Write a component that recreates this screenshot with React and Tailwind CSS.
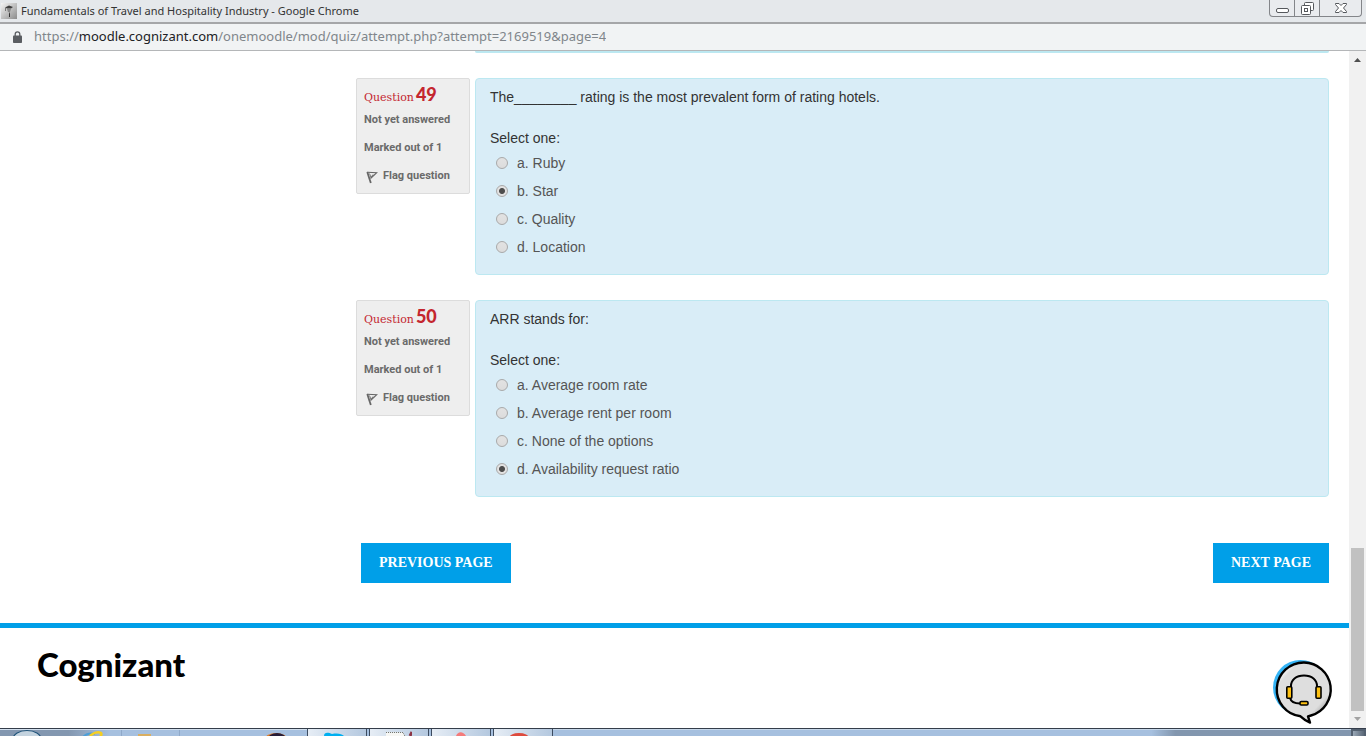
const questions = [
  {
    number: 49,
    text: 'The________ rating is the most prevalent form of rating hotels.',
    options: ['a. Ruby', 'b. Star', 'c. Quality', 'd. Location'],
    selected: 1,
  },
  {
    number: 50,
    text: 'ARR stands for:',
    options: [
      'a. Average room rate',
      'b. Average rent per room',
      'c. None of the options',
      'd. Availability request ratio',
    ],
    selected: 3,
  },
];

function TitleBar() {
  return (
    <header className="flex h-6 shrink-0 items-start border-b-2 border-[#a5a6a8] bg-[#e5e8eb] font-['Noto_Sans',sans-serif]">
      <div className="flex h-[22px] min-w-0 flex-1 items-center gap-1 pl-px">
        <svg width="16" height="16" viewBox="0 0 16 16" aria-hidden="true">
          <defs>
            <linearGradient id="fav" x1="0" y1="0" x2="1" y2="1">
              <stop offset="0" stopColor="#f4f4f4" />
              <stop offset="1" stopColor="#8c8c8c" />
            </linearGradient>
          </defs>
          <rect width="16" height="16" fill="url(#fav)" />
          <path d="M4 4.500l4-2 4 1.500-2 1.500H6z" fill="#3e3e3e" />
          <path d="M6 6h4l-1 3H7z" fill="#888" />
          <path d="M8 9l1 1.500V14H8z" fill="#333" />
          <path d="M4.500 5v3" stroke="#777" />
        </svg>
        <h1 className="truncate text-[11px] text-[#333]">
          Fundamentals of Travel and Hospitality Industry - Google Chrome
        </h1>
      </div>
      <div className="mr-1 flex h-[17px] overflow-hidden rounded-b border-x border-b border-[#838589] bg-[#e9ebee]">
        <button type="button" aria-label="Minimize" className="flex w-[25px] items-center justify-center border-r border-[#838589]">
          <svg width="13" height="17" viewBox="0 0 13 17" fill="#fff" stroke="#55585c">
            <rect x="0.5" y="8.5" width="12" height="4" rx="1.5" />
          </svg>
        </button>
        <button type="button" aria-label="Restore" className="flex w-[25px] items-center justify-center border-r border-[#838589]">
          <svg width="13" height="17" viewBox="0 0 13 17" fill="#fff" stroke="#55585c">
            <rect x="3.5" y="2.5" width="9" height="8" rx="1" />
            <rect x="0.5" y="5.5" width="9" height="9" rx="1" />
            <rect x="3.5" y="8.5" width="3" height="3" />
          </svg>
        </button>
        <button type="button" aria-label="Close" className="flex w-[41px] items-center justify-center">
          <svg width="12" height="17" viewBox="0 0 12 17" fill="#fff" stroke="#55585c">
            <path d="M0.5 3.5h3.5l2 2 2-2h3.5v1l-3 3.5 3 3.5v1H8l-2-2-2 2H0.5v-1l3-3.5-3-3.5z" />
          </svg>
        </button>
      </div>
    </header>
  );
}

function AddressBar() {
  return (
    <div className="flex h-[27px] shrink-0 items-center gap-3 border-b border-[#b4b6b8] bg-[#f1f3f4] pl-[13px] font-['Noto_Sans',sans-serif] text-[13px] text-[#80868b]">
      <svg width="9" height="12" viewBox="0 0 9 12" aria-hidden="true">
        <path d="M2.2 5V3.2a2.3 2.3 0 0 1 4.6 0V5" fill="none" stroke="#5a5d61" strokeWidth="1.3" />
        <rect y="4.5" width="9" height="7.5" rx="0.8" fill="#5a5d61" />
      </svg>
      <span className="truncate">
        https://<span className="text-[#202124]">moodle.cognizant.com</span>
        /onemoodle/mod/quiz/attempt.php?attempt=2169519&amp;page=4
      </span>
    </div>
  );
}

function FlagIcon() {
  return (
    <svg width="12" height="16" viewBox="0 0 12 16" fill="none" stroke="#666" aria-hidden="true">
      <path d="M1.300 4L4.800 15" strokeWidth="1.8" />
      <path d="M1 4.300l9.800.4L4.500 10.500" strokeWidth="1.1" />
      <path d="M3.500 5.500L5 9.500l2-3" strokeWidth="0.9" />
    </svg>
  );
}

function QuestionInfo({ number }) {
  return (
    <aside className="w-[114px] shrink-0 rounded-xs border border-[#dcdcdc] bg-[#eee] px-[7px] py-[3px] font-[Roboto,sans-serif] text-[11px] font-bold text-[#6a6a6a]">
      <h3 className="flex h-6 items-baseline gap-0.5 font-['DejaVu_Serif',serif] text-[11px] leading-6 font-normal text-[#c4262e]">
        Question
        <span className="font-[Lato,sans-serif] text-lg leading-6 font-black">{number}</span>
      </h3>
      <p className="leading-7">Not yet answered</p>
      <p className="leading-7">Marked out of 1</p>
      <a href="#flag" className="flex h-7 items-center gap-[5px] pl-0.5">
        <FlagIcon />
        <span className="whitespace-nowrap">Flag question</span>
      </a>
    </aside>
  );
}

function Question({ question }) {
  return (
    <section className="flex items-start gap-[5px]">
      <QuestionInfo number={question.number} />
      <div className="min-w-0 flex-1 rounded border border-[#bce8f1] bg-[#d9edf7] px-3.5 pt-2 pb-[13px] text-sm leading-5 text-[#333]">
        <p>{question.text}</p>
        <fieldset className="pt-[21px]">
          <legend className="float-left w-full">Select one:</legend>
          <div className="clear-both pt-px">
            {question.options.map((option, i) => (
              <label key={option} className="flex h-7 items-center gap-[9px] pl-1.5 text-[#555]">
                <input
                  type="radio"
                  name={`q${question.number}`}
                  defaultChecked={i === question.selected}
                  className="size-3 shrink-0 appearance-none rounded-full border border-[#a9a9a9] bg-linear-to-b from-[#e2e2e2] to-[#dcdcdc] checked:bg-[radial-gradient(circle,#4d4d4d_0,#4d4d4d_2.5px,#e2e2e2_3.5px)]"
                />
                {option}
              </label>
            ))}
          </div>
        </fieldset>
      </div>
    </section>
  );
}

function PageButton({ children }) {
  return (
    <button
      type="button"
      className="h-10 bg-[#009fe8] px-[18px] font-['Liberation_Serif',serif] text-sm font-bold text-white uppercase"
    >
      {children}
    </button>
  );
}

function ChatButton() {
  return (
    <button type="button" aria-label="Chat support">
      <svg width="62" height="66" viewBox="0 0 62 66">
        <defs>
          <linearGradient id="bubble" x1="0" y1="0" x2="1" y2="1">
            <stop offset="0.12" stopColor="#fff" />
            <stop offset="0.2" stopColor="#dedede" />
            <stop offset="0.74" stopColor="#dedede" />
            <stop offset="0.8" stopColor="#bdbdbd" />
          </linearGradient>
        </defs>
        <circle cx="28.500" cy="28.500" r="27.500" fill="#35b4f5" />
        <path
          d="M32 3.500a27 27 0 0 1 7 53l-3 .8 2 6.300c-4-1.500-7-4-9.500-6.300A27 27 0 0 1 32 3.500z"
          fill="url(#bubble)"
          stroke="#000"
          strokeWidth="2.4"
          strokeLinejoin="round"
        />
        <path d="M19 28v-1c0-6 5-10.500 13-10.500S45 21 45 27v1" fill="none" stroke="#000" strokeWidth="2" />
        <path d="M18 39c1 4 4 5.500 10 5.500" fill="none" stroke="#000" strokeWidth="2" />
        <g fill="#fdc011" stroke="#000" strokeWidth="1.6">
          <rect x="14.800" y="27.800" width="5" height="11.500" rx="1" />
          <rect x="44" y="27.800" width="5" height="11.500" rx="1" />
          <rect x="28" y="42.500" width="8" height="3.500" rx="1.200" />
        </g>
      </svg>
    </button>
  );
}

function Scrollbar() {
  return (
    <div className="flex w-[17px] shrink-0 flex-col items-center bg-[#f1f1f1]" aria-hidden="true">
      <svg className="shrink-0" width="17" height="17" viewBox="0 0 17 17">
        <path d="M5 11h7L8.500 7z" fill="#505050" />
      </svg>
      <div className="flex-1" />
      <div className="h-[163px] w-[13px] bg-[#c1c1c1]" />
      <svg className="shrink-0" width="17" height="17" viewBox="0 0 17 17">
        <path d="M5 6h7l-3.500 4z" fill="#a3a3a3" />
      </svg>
    </div>
  );
}

function TaskButton({ label, children }) {
  return (
    <button
      type="button"
      aria-label={label}
      className="flex w-[60px] justify-center overflow-hidden border-x border-[#3d4c60] bg-linear-to-r from-[#e6edf5] to-[#b4c8df]"
    >
      <svg width="26" height="7" viewBox="0 0 26 7">
        {children}
      </svg>
    </button>
  );
}

function Taskbar() {
  return (
    <footer className="flex h-2 shrink-0 overflow-hidden border-t border-[#343d4a] bg-linear-to-r from-[#8397b0] from-5% via-[#a6c0df] via-8% to-[#a6c0df]">
      <svg width="307" height="7" viewBox="0 0 307 7" className="shrink-0" aria-hidden="true">
        <path d="M0 .5h307" stroke="#d3e0ee" />
        <ellipse cx="27" cy="10" rx="14" ry="8.500" fill="#c4d3df" stroke="#1f5379" strokeWidth="1.200" />
        <path d="M83 8c3-3 7-4 12-3" stroke="#4d9fd8" strokeWidth="2" fill="none" />
        <path d="M90 7c3-3 8-5 11-3 1 1 0 3-1 4" stroke="#f6cf22" strokeWidth="2.500" fill="none" />
        <path d="M121.500 1v6M179.500 1v6" stroke="#8fa9c9" />
        <rect x="138" y="5" width="13" height="2" fill="#d9ae61" />
        <ellipse cx="276" cy="10" rx="11" ry="6" fill="#e07b28" />
        <ellipse cx="277" cy="10" rx="9" ry="6" fill="#261d38" />
      </svg>
      <div className="flex shrink-0 gap-0.5">
        <TaskButton label="Skype">
          <path d="M0 7c0-4 4-4 8-2 6-1 10 0 12 2z" fill="#00aff0" />
        </TaskButton>
        <TaskButton label="Notes">
          <path d="M-2 3.500h19l2 4H-2z" fill="#f7f7f4" stroke="#77776f" strokeDasharray="1 1" />
          <path d="M26 3l-2 4" stroke="#8b3344" strokeWidth="3" />
        </TaskButton>
        <TaskButton label="Documents">
          <path d="M8 7c2-5 7-5 10 0z" fill="#f47b7b" />
        </TaskButton>
        <TaskButton label="Chrome">
          <ellipse cx="9" cy="9" rx="10" ry="5" fill="#dd4b3e" />
        </TaskButton>
      </div>
      <div className="flex-1 border-t border-[#c7d8ea] bg-linear-to-r from-[#a6c0df] from-75% to-[#8296ae] to-78%" />
      <button type="button" aria-label="Show desktop" className="w-[15px] border-2 border-b-0 border-[#536070] bg-linear-to-r from-[#9aa8b7] to-[#5b6878]" />
    </footer>
  );
}

export default function App() {
  return (
    <div className="flex h-screen flex-col overflow-hidden bg-white font-['Liberation_Sans',Arial,sans-serif]">
      <TitleBar />
      <AddressBar />
      <div className="flex min-h-0 flex-1">
        <main className="min-w-0 flex-1 overflow-hidden">
          <div className="pr-5 pl-[356px]">
            <div className="ml-[119px] h-0.5 rounded-b border-b border-[#bce8f1] bg-[#bce8f1]" />
            <div className="flex flex-col gap-[25px] pt-[25px]">
              {questions.map((q) => (
                <Question key={q.number} question={q} />
              ))}
            </div>
            <div className="flex justify-between pt-[46px] pb-10 pl-[5px]">
              <PageButton>Previous page</PageButton>
              <PageButton>Next page</PageButton>
            </div>
          </div>
          <div className="flex items-start justify-between border-t-[5px] border-[#009fe8] pr-[15px] pl-[37px]">
            <a href="#home" className="flex items-start pt-4 font-[Lato,sans-serif] text-[33px] leading-10 font-black text-black">
              Cognizant
            </a>
            <div className="pt-[31px]">
              <ChatButton />
            </div>
          </div>
        </main>
        <Scrollbar />
      </div>
      <Taskbar />
    </div>
  );
}
